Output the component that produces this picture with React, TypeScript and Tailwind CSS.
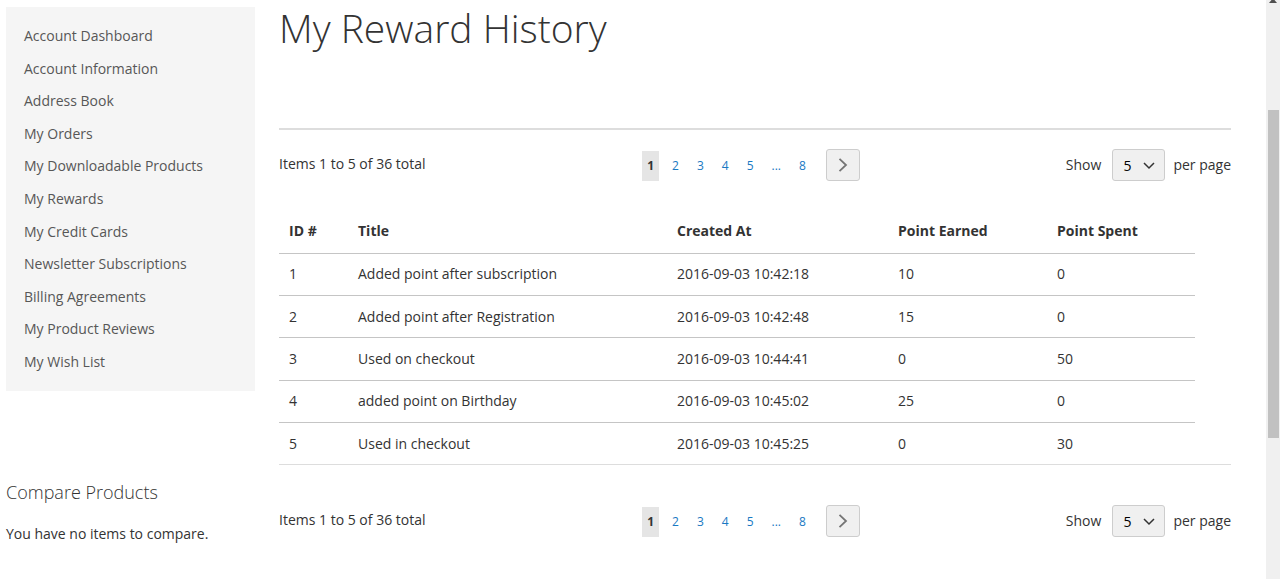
import { useState } from "react";

const accountLinks = [
  "Account Dashboard",
  "Account Information",
  "Address Book",
  "My Orders",
  "My Downloadable Products",
  "My Rewards",
  "My Credit Cards",
  "Newsletter Subscriptions",
  "Billing Agreements",
  "My Product Reviews",
  "My Wish List",
];

const rewards = [
  { id: 1, title: "Added point after subscription", createdAt: "2016-09-03 10:42:18", earned: 10, spent: 0 },
  { id: 2, title: "Added point after Registration", createdAt: "2016-09-03 10:42:48", earned: 15, spent: 0 },
  { id: 3, title: "Used on checkout", createdAt: "2016-09-03 10:44:41", earned: 0, spent: 50 },
  { id: 4, title: "added point on Birthday", createdAt: "2016-09-03 10:45:02", earned: 25, spent: 0 },
  { id: 5, title: "Used in checkout", createdAt: "2016-09-03 10:45:25", earned: 0, spent: 30 },
];

const pages = ["2", "3", "4", "5", "...", "8"];

function Sidebar() {
  return (
    <aside className="w-[249px] shrink-0 pt-[7px]">
      <nav aria-label="Account">
        <ul className="flex min-h-96 flex-col justify-between bg-[#f5f5f5] px-[18px] py-[19px]">
          {accountLinks.map((label) => (
            <li key={label} className="leading-5">
              <a href="#" className="text-[#575757] hover:underline">
                {label}
              </a>
            </li>
          ))}
        </ul>
      </nav>

      {/* Compare */}
      <section className="mt-[89px]">
        <h2 className="text-lg leading-6 font-light">Compare Products</h2>
        <p className="mt-5 leading-5">You have no items to compare.</p>
      </section>
    </aside>
  );
}

function Toolbar({ id }: { id: string }) {
  const [limit, setLimit] = useState("5");

  return (
    <div className="grid grid-cols-[1fr_auto_1fr] items-center">
      <p className="pb-[2px] leading-5">Items 1 to 5 of 36 total</p>

      <nav aria-label="Page" className="flex items-center pr-2">
        <ul className="flex items-center gap-2 pt-px text-xs leading-[30px]">
          <li className="bg-[#e5e5e5] px-[5px] font-bold" aria-current="page">
            1
          </li>
          {pages.map((page) => (
            <li key={page}>
              <a href="#" className="block px-[5px] text-[#1979c3] hover:underline">
                {page}
              </a>
            </li>
          ))}
        </ul>
        <button
          type="button"
          aria-label="Next page"
          className="ml-[15px] flex h-8 w-[34px] items-center justify-center rounded-[3px] border border-[#cdcdcd] bg-[#f0f0f0]"
        >
          <svg width="10" height="16" viewBox="0 0 10 16" fill="none" stroke="#757575" strokeWidth="1.8">
            <path d="M1.500 1.800 8 8l-6.500 6.200" />
          </svg>
        </button>
      </nav>

      <div className="flex items-center justify-end">
        <label htmlFor={id}>Show</label>
        <div className="relative mr-2 ml-[11px]">
          <select
            id={id}
            value={limit}
            onChange={(e) => setLimit(e.target.value)}
            className="block h-8 w-[53px] appearance-none rounded-[3px] border border-[#cdcdcd] bg-[#f0f0f0] pt-[2px] pl-[10px] text-sm text-black"
          >
            <option>5</option>
            <option>10</option>
            <option>15</option>
            <option>20</option>
          </select>
          <svg
            className="pointer-events-none absolute top-[13px] right-[10px]"
            width="12"
            height="8"
            viewBox="0 0 12 8"
            fill="none"
            stroke="#333"
            strokeWidth="1.5"
          >
            <path d="M1 1l5 5 5-5" />
          </svg>
        </div>
        <span>per page</span>
      </div>
    </div>
  );
}

function RewardTable() {
  return (
    <div className="border-b border-[#dddddd] pr-9">
      <table className="h-[254px] w-full table-fixed text-left">
        <thead>
          <tr className="h-[43px] border-b border-[#c5c5c5]">
            <th className="w-[69px] px-[10px] font-bold">ID #</th>
            <th className="px-[10px] font-bold">Title</th>
            <th className="w-[221px] px-[10px] font-bold">Created At</th>
            <th className="w-[159px] px-[10px] font-bold">Point Earned</th>
            <th className="w-[148px] px-[10px] font-bold">Point Spent</th>
          </tr>
        </thead>
        <tbody>
          {rewards.map((row) => (
            <tr key={row.id} className="border-b border-[#c5c5c5] last:border-b-0">
              <td className="px-[10px]">{row.id}</td>
              <td className="px-[10px]">{row.title}</td>
              <td className="px-[10px]">{row.createdAt}</td>
              <td className="px-[10px]">{row.earned}</td>
              <td className="px-[10px]">{row.spent}</td>
            </tr>
          ))}
        </tbody>
      </table>
    </div>
  );
}

function ScrollTrack() {
  return (
    <div aria-hidden="true" className="flex w-[14px] shrink-0 flex-col items-center bg-[#f0f0f0]">
      <svg width="8" height="4" viewBox="0 0 8 4" fill="#505050">
        <path d="M2.500 0h3L8 3H0z" />
      </svg>
      <div className="mt-[106px] h-[328px] w-[11px] bg-[#c1c1c1]" />
    </div>
  );
}

export default function App() {
  return (
    <div className="flex min-h-screen bg-white font-['Open_Sans',sans-serif] text-sm text-[#333333]">
      <div className="flex flex-1 gap-6 pr-[35px] pl-[6px]">
        <Sidebar />
        <main className="min-w-0 flex-1 pt-[6px]">
          <h1 className="text-[39px] leading-[44px] font-light">My Reward History</h1>
          <div className="mt-[78px] border-t-2 border-[#dddddd] pt-[19px]">
            <Toolbar id="limit-top" />
          </div>
          <div className="mt-[29px] mb-10">
            <RewardTable />
          </div>
          <Toolbar id="limit-bottom" />
        </main>
      </div>
      <ScrollTrack />
    </div>
  );
}
